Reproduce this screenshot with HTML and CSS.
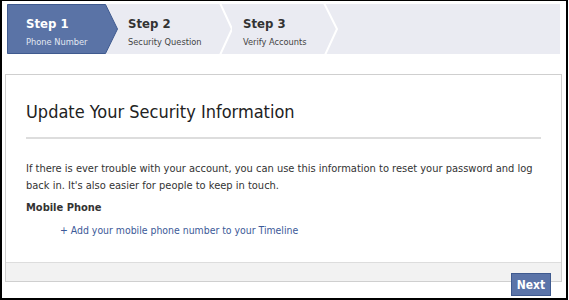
FILE: index.html
```html
<!DOCTYPE html>
<html>
<head>
<meta charset="utf-8">
<link rel="stylesheet" href="styles.css">
</head>
<body>
<div class="frame">
  <div class="steps">
    <div class="step step-active">
      <svg class="step-shape" width="111" height="50" viewBox="0 0 111 50"><polygon points="0.5,0.5 98.5,0.5 110.5,25 98.5,49.5 0.5,49.5" fill="#5a73a6" stroke="#3f5a8f"/></svg>
      <div class="step-title">Step 1</div>
      <div class="step-sub">Phone Number</div>
    </div>
    <div class="step step-2">
      <svg class="step-shape" width="115" height="50" viewBox="0 0 115 50"><polyline points="103,-1 115,25 103,51" fill="none" stroke="#ffffff" stroke-width="2"/></svg>
      <div class="step-title">Step 2</div>
      <div class="step-sub">Security Question</div>
    </div>
    <div class="step step-3">
      <svg class="step-shape" width="107" height="50" viewBox="0 0 107 50"><polyline points="92,-1 105,25 93,51" fill="none" stroke="#ffffff" stroke-width="2"/></svg>
      <div class="step-title">Step 3</div>
      <div class="step-sub">Verify Accounts</div>
    </div>
  </div>
  <div class="card">
    <div class="card-body">
      <h1 class="title">Update Your Security Information</h1>
      <p class="intro">If there is ever trouble with your account, you can use this information to reset your password and log back in. It's also easier for people to keep in touch.</p>
      <div class="label">Mobile Phone</div>
      <a class="add-link" href="#">+ Add your mobile phone number to your Timeline</a>
    </div>
    <div class="card-footer"></div>
    <button class="next-btn">Next</button>
  </div>
</div>
</body>
</html>
```
FILE: styles.css
```css
html, body {
  margin: 0;
  padding: 0;
  background: #ffffff;
}
body {
  font-family: "DejaVu Sans Condensed", "DejaVu Sans", sans-serif;
  color: #333333;
}
.frame {
  box-sizing: border-box;
  width: 568px;
  height: 300px;
  border-top: 1px solid #000;
  border-left: 2px solid #000;
  border-right: 2px solid #000;
  border-bottom: 2px solid #000;
  padding: 3px 0 0 3px;
}
.steps {
  display: flex;
  margin-left: 2px;
  width: 553px;
  height: 50px;
  background: #eaebf2;
}
.step {
  position: relative;
  box-sizing: border-box;
  height: 50px;
  padding-top: 12px;
}
.step-shape {
  position: absolute;
  left: 0;
  top: 0;
}
.step-title, .step-sub {
  position: relative;
  white-space: nowrap;
}
.step-title {
  font-weight: bold;
  font-size: 13px;
  line-height: 16px;
  color: #333;
}
.step-sub {
  font-size: 9.2px;
  line-height: 13px;
  margin-top: 3px;
  color: #444;
}
.step-active {
  width: 110px;
  padding-left: 19px;
}
.step-active .step-title { color: #ffffff; }
.step-active .step-sub { color: #e3e8f2; }
.step-2 {
  width: 115px;
  padding-left: 11px;
}
.step-3 {
  width: 107px;
  padding-left: 11px;
}
.card {
  position: relative;
  box-sizing: border-box;
  margin-top: 20px;
  width: 557px;
  height: 208px;
  border: 1px solid #cfcfcf;
  display: flex;
  flex-direction: column;
}
.card-body {
  flex: 1;
  padding: 0 20px 0 20px;
}
.title {
  margin: 26px 0 0 0;
  padding-bottom: 14px;
  border-bottom: 2px solid #dddddd;
  font-size: 18px;
  line-height: 22px;
  font-weight: normal;
  color: #222;
}
.intro {
  margin: 21px 0 0 0;
  font-size: 11px;
  line-height: 17px;
  color: #333;
  width: 520px;
}
.label {
  margin-top: 6px;
  font-weight: bold;
  font-size: 11px;
  line-height: 16px;
  color: #333;
}
.add-link {
  display: block;
  margin: 6px 0 0 34px;
  font-size: 10.4px;
  line-height: 16px;
  color: #3b5998;
  text-decoration: none;
}
.card-footer {
  height: 18px;
  background: #f2f2f2;
  border-top: 1px solid #dddddd;
}
.next-btn {
  position: absolute;
  right: 10px;
  bottom: -15px;
  width: 40px;
  height: 23px;
  padding: 0;
  background: #5b74a8;
  border: 1px solid #3f5a8f;
  color: #ffffff;
  font-family: "DejaVu Sans Condensed", "DejaVu Sans", sans-serif;
  font-weight: bold;
  font-size: 12px;
}
```
